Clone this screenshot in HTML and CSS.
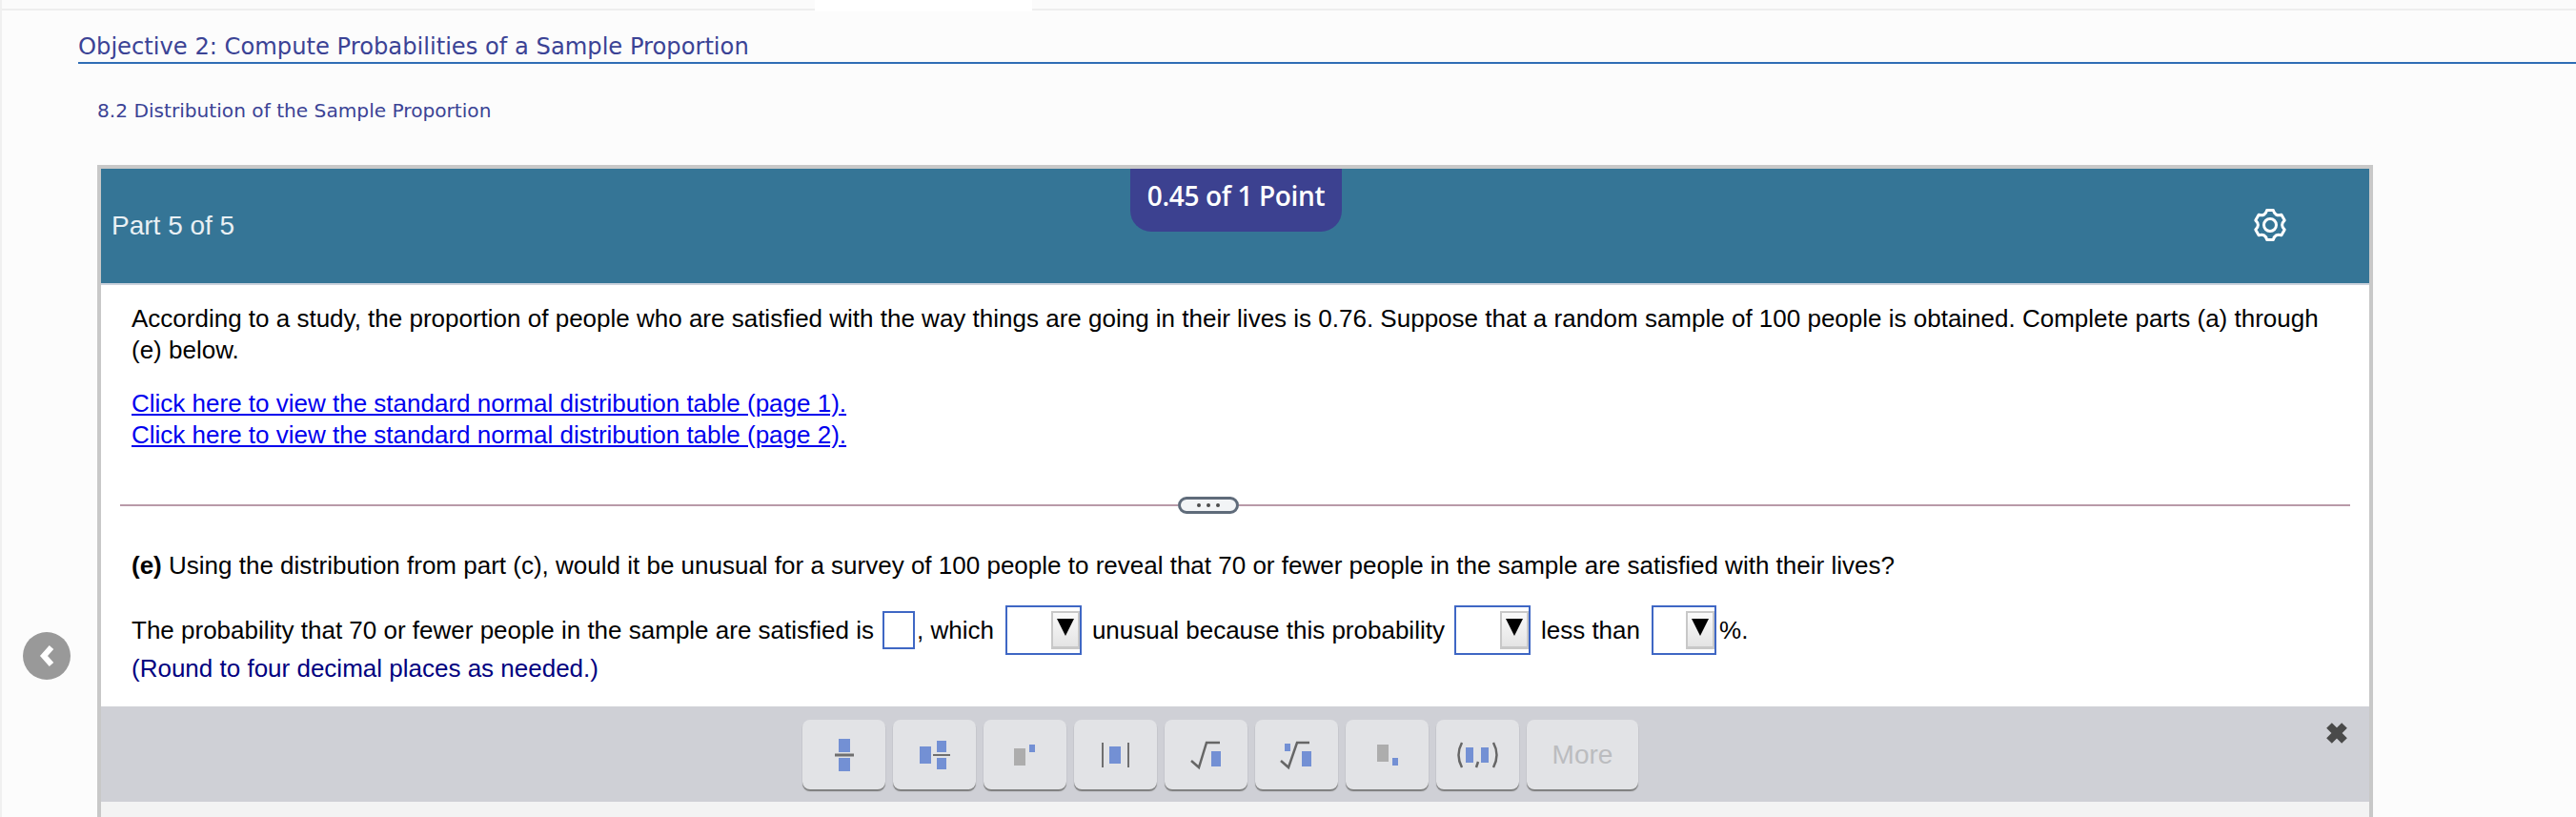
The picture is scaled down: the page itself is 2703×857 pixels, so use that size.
FILE: index.html
```html
<!DOCTYPE html>
<html lang="en">
<head>
    <meta charset="UTF-8">
    <title>Objective 2: Compute Probabilities of a Sample Proportion</title>
    <link rel="stylesheet" href="styles.css">
</head>
<body>
    <div class="tabstrip"><div class="tab"></div></div>

    <h1 class="objective">Objective 2: Compute Probabilities of a Sample Proportion</h1>
    <h2 class="section">8.2 Distribution of the Sample Proportion</h2>

    <button class="prev" aria-label="Previous">
        <svg width="18" height="26" viewBox="0 0 18 26"><path d="M14 4L6 13L14 22" fill="none" stroke="#fff" stroke-width="6"/></svg>
    </button>

    <div class="card">
        <div class="header">
            <span>Part 5 of 5</span>
            <div class="badge">0.45 of 1 Point</div>
            <svg class="gear" width="36" height="36" viewBox="0 0 36 36">
                <path d="M14.7 2.4L21.3 2.4Q23 9.34 29.9 7.3L33.2 13.1Q28 18 33.2 22.9L29.9 28.7Q23 26.66 21.3 33.6L14.7 33.6Q13 26.66 6.1 28.7L2.8 22.9Q8 18 2.8 13.1L6.1 7.3Q13 9.34 14.7 2.4Z" fill="none" stroke="#fff" stroke-width="3" stroke-linejoin="round"/>
                <circle cx="18" cy="18" r="6.5" fill="none" stroke="#fff" stroke-width="3"/>
            </svg>
        </div>

        <div class="intro">
            <p>According to a study, the proportion of people who are satisfied with the way things are going in their lives is 0.76. Suppose that a random sample of 100 people is obtained. Complete parts (a) through (e) below.</p>
            <div class="links">
                <a href="#">Click here to view the standard normal distribution table (page 1).</a><br>
                <a href="#">Click here to view the standard normal distribution table (page 2).</a>
            </div>
        </div>

        <div class="divider">
            <span class="rule rule-left"></span>
            <span class="pill"><i></i><i></i><i></i></span>
            <span class="rule"></span>
        </div>

        <div class="part">
            <p><b>(e)</b> Using the distribution from part (c), would it be unusual for a survey of 100 people to reveal that 70 or fewer people in the sample are satisfied with their lives?</p>
            <div class="answer">
                <span>The probability that 70 or fewer people in the sample are satisfied is</span>
                <span class="box"></span>
                <span>, which</span>
                <span class="drop"><span class="arrow"></span></span>
                <span>unusual because this probability</span>
                <span class="drop drop-mid"><span class="arrow"></span></span>
                <span>less than</span>
                <span class="drop drop-small"><span class="arrow"></span></span>
                <span>%.</span>
            </div>
            <p class="hint">(Round to four decimal places as needed.)</p>
        </div>

        <div class="toolbar">
            <button class="tool">
                <svg width="87" height="73" viewBox="0 0 87 73">
                    <rect class="blue" x="38" y="20" width="12" height="14"/>
                    <rect class="dark" x="34" y="35.5" width="20" height="3"/>
                    <rect class="blue" x="38" y="40" width="12" height="14"/>
                </svg>
            </button>
            <button class="tool">
                <svg width="87" height="73" viewBox="0 0 87 73">
                    <rect class="blue" x="28" y="28" width="12" height="18"/>
                    <rect class="blue" x="46" y="22" width="10" height="12"/>
                    <rect class="dark" x="42" y="36" width="18" height="2"/>
                    <rect class="blue" x="46" y="40" width="10" height="12"/>
                </svg>
            </button>
            <button class="tool">
                <svg width="87" height="73" viewBox="0 0 87 73">
                    <rect class="grey" x="32" y="30" width="12" height="18"/>
                    <rect class="blue" x="48" y="26" width="6" height="8"/>
                </svg>
            </button>
            <button class="tool">
                <svg width="87" height="73" viewBox="0 0 87 73">
                    <rect class="dark" x="29" y="24" width="2" height="26"/>
                    <rect class="blue" x="37" y="28" width="12" height="18"/>
                    <rect class="dark" x="56" y="24" width="2" height="26"/>
                </svg>
            </button>
            <button class="tool">
                <svg width="87" height="73" viewBox="0 0 87 73">
                    <path class="radical" d="M28 43L36 50L44 24L58 24"/>
                    <rect class="blue" x="49" y="33" width="10" height="16"/>
                </svg>
            </button>
            <button class="tool">
                <svg width="87" height="73" viewBox="0 0 87 73">
                    <path class="radical" d="M27 43L35 50L44 24L57 24"/>
                    <rect class="blue" x="31" y="25" width="6" height="8"/>
                    <rect class="blue" x="49" y="33" width="10" height="16"/>
                </svg>
            </button>
            <button class="tool">
                <svg width="87" height="73" viewBox="0 0 87 73">
                    <rect class="grey" x="33" y="26" width="12" height="18"/>
                    <rect class="blue" x="49" y="40" width="6" height="8"/>
                </svg>
            </button>
            <button class="tool">
                <svg width="87" height="73" viewBox="0 0 87 73">
                    <path class="radical" d="M27 24Q20 37 27 50"/>
                    <rect class="blue" x="31" y="29" width="8" height="16"/>
                    <path class="radical" d="M44 44L42 50"/>
                    <rect class="blue" x="47" y="29" width="8" height="16"/>
                    <path class="radical" d="M60 24Q67 37 60 50"/>
                </svg>
            </button>
            <button class="tool tool-more">More</button>
            <svg class="close" width="26" height="26" viewBox="0 0 26 26"><path d="M5 5L21 21M21 5L5 21" stroke="#4a4a4a" stroke-width="8"/></svg>
        </div>
        <div class="footer"></div>
    </div>
</body>
</html>
```

FILE: styles.css
```css
* {
    box-sizing: border-box;
}
body {
    margin: 0;
    height: 857px;
    overflow: hidden;
    position: relative;
    background: #fcfcfc;
    border-left: 2px solid #f0f0f0;
    font-family: "Liberation Sans", Arial, sans-serif;
    font-size: 26px;
    color: #000;
}
.tabstrip {
    height: 11px;
    margin-left: -2px;
    background: #fbfbfb;
    border-bottom: 2px solid #eeeeee;
    padding-left: 855px;
}
.tab {
    width: 228px;
    height: 12px;
    background: #fff;
}
.objective {
    margin: 20px 0 0 80px;
    height: 36px;
    padding-top: 1px;
    line-height: 34px;
    border-bottom: 2px solid #2f6db5;
    font-family: "DejaVu Sans", Verdana, sans-serif;
    font-size: 24.2px;
    font-weight: normal;
    color: #3b4395;
}
.section {
    margin: 34px 0 42px 100px;
    line-height: 30px;
    font-family: "DejaVu Sans", Verdana, sans-serif;
    font-size: 20.15px;
    font-weight: normal;
    color: #3b4395;
}
.prev {
    position: absolute;
    left: 22px;
    top: 663px;
    width: 50px;
    height: 50px;
    padding: 0;
    border: none;
    border-radius: 50%;
    background: #999;
    display: flex;
    align-items: center;
    justify-content: center;
}
.card {
    width: 2388px;
    height: 684px;
    margin-left: 100px;
    display: flex;
    flex-direction: column;
    background: #fff;
    border: 4px solid #c8c8c8;
    border-bottom: none;
}
.header {
    position: relative;
    height: 122px;
    flex: none;
    display: flex;
    align-items: center;
    justify-content: space-between;
    padding: 0 86px 0 11px;
    background: #357596;
    border-bottom: 2px solid #ccd2dc;
    color: #e9f0f4;
    font-size: 28px;
}
.badge {
    position: absolute;
    left: 1080px;
    top: 0;
    width: 222px;
    height: 66px;
    padding-top: 10px;
    border-radius: 0 0 22px 22px;
    background: #3c4190;
    color: #fff;
    font-family: "Open Sans", sans-serif;
    font-size: 28px;
    font-weight: 600;
    letter-spacing: -0.35px;
    line-height: 36px;
    text-align: center;
}
.gear {
    margin-bottom: 2px;
}
.intro {
    padding: 19px 32px 0;
    line-height: 32.5px;
}
.intro p {
    margin: 0;
}
.links {
    margin-top: 24px;
    line-height: 33px;
}
.links a {
    color: #0000ee;
}
.divider {
    display: flex;
    align-items: center;
    height: 18px;
    margin: 48px 20px 0;
}
.rule {
    flex: 1;
    height: 2px;
    background: #b99aa8;
}
.rule-left {
    flex: none;
    width: 1110px;
}
.pill {
    width: 64px;
    height: 18px;
    display: flex;
    align-items: center;
    justify-content: center;
    gap: 6px;
    background: #f2f4f6;
    border: 3px solid #5f6b7a;
    border-radius: 9px;
}
.pill i {
    width: 4px;
    height: 4px;
    border-radius: 50%;
    background: #4c4c4c;
}
.part {
    padding: 38px 32px 0;
    line-height: 32px;
}
.part p {
    margin: 0;
}
.answer {
    display: flex;
    align-items: center;
    height: 52px;
    margin-top: 26px;
}
.box {
    width: 34px;
    height: 40px;
    margin: 0 2px 0 9px;
    border: 2px solid #3f67c4;
}
.drop {
    width: 80px;
    height: 52px;
    margin: 0 11px 0 12px;
    padding-top: 4px;
    display: flex;
    justify-content: flex-end;
    border: 2px solid #3f67c4;
}
.drop-mid {
    margin-left: 10px;
}
.drop-small {
    width: 68px;
    margin-right: 3px;
}
.arrow {
    width: 30px;
    height: 40px;
    padding-top: 6px;
    display: flex;
    justify-content: center;
    background: linear-gradient(#fafafa, #e4e4e4);
    border: 2px solid #c8c8c8;
    border-bottom-width: 3px;
}
.arrow::before {
    content: "";
    width: 0;
    height: 0;
    border-left: 9px solid transparent;
    border-right: 9px solid transparent;
    border-top: 18px solid #000;
}
.part .hint {
    margin-top: -2px;
    color: #000080;
}
.toolbar {
    height: 100px;
    flex: none;
    margin-top: 24px;
    padding: 14px 21px 0 736px;
    display: flex;
    align-items: flex-start;
    gap: 8px;
    background: #cfd0d6;
}
.tool {
    width: 87px;
    height: 73px;
    padding: 0;
    border: none;
    border-radius: 8px;
    background: #e2e3e6;
    box-shadow: 0 2px 1px #7d7d7d;
    font-family: inherit;
}
.tool svg {
    display: block;
}
.tool-more {
    width: 117px;
    font-size: 28px;
    color: #bbbcbf;
}
.blue {
    fill: #7390d4;
}
.grey {
    fill: #adadad;
}
.dark {
    fill: #6f6f6f;
}
.radical {
    fill: none;
    stroke: #666;
    stroke-width: 2.5;
}
.close {
    margin: 1px 0 0 auto;
}
.footer {
    flex: 1;
    background: #f3f3f3;
}
```
